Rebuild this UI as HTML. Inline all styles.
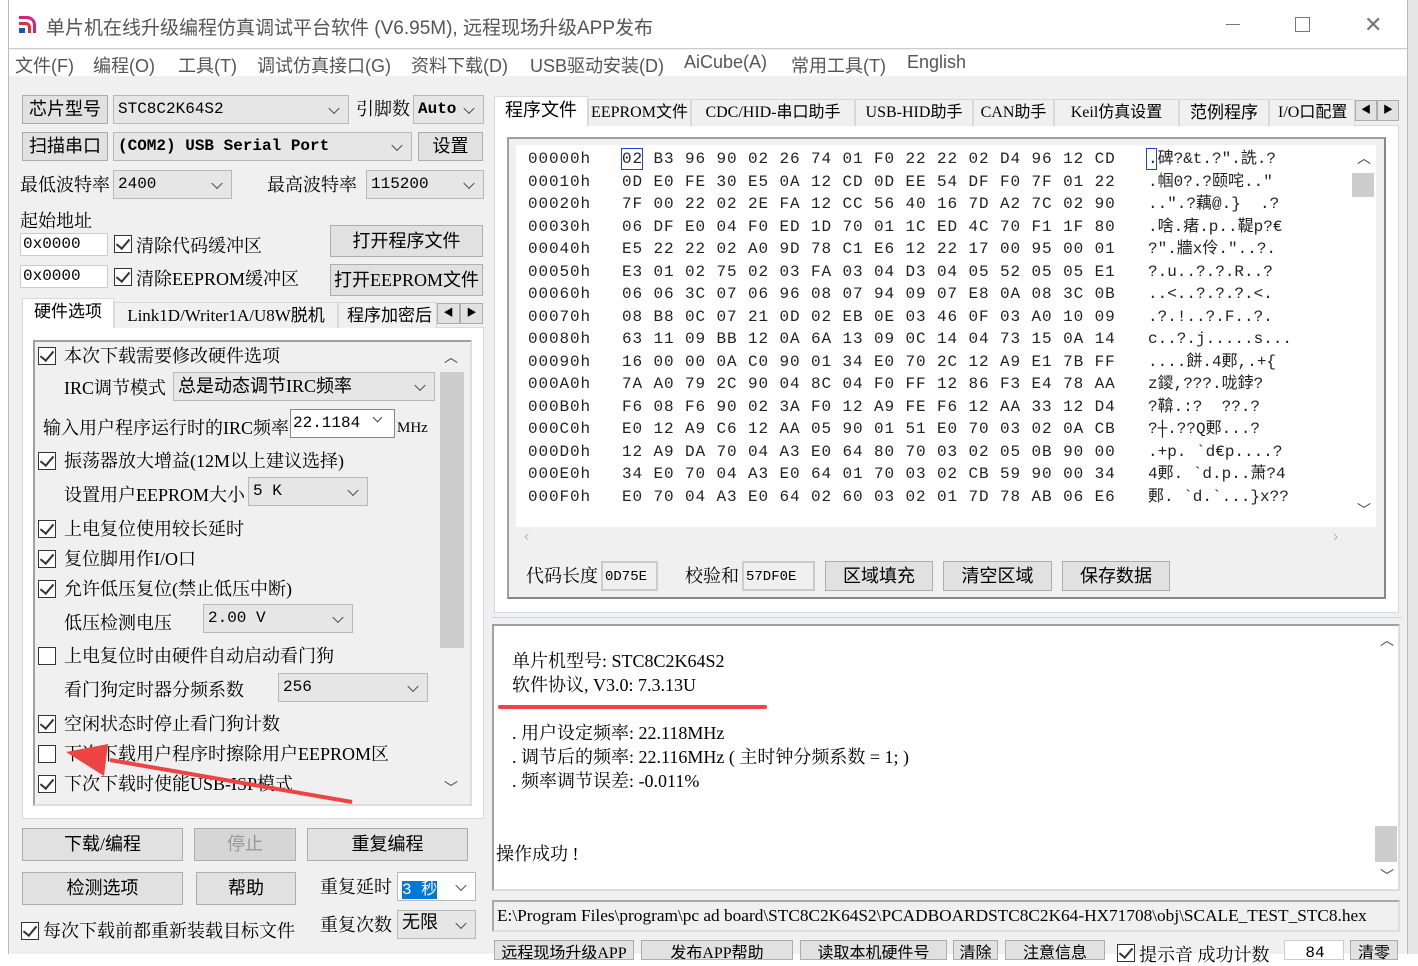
<!DOCTYPE html>
<html><head><meta charset="utf-8">
<style>
*{box-sizing:border-box;margin:0;padding:0}
body{width:1418px;height:954px;overflow:hidden;background:#fff;position:relative;font-family:"Liberation Sans","Noto Sans CJK SC",sans-serif;color:#000}
.a{position:absolute;white-space:nowrap}
.t{position:absolute;white-space:nowrap;font-size:18px;line-height:22px;font-family:"Liberation Serif","Noto Serif CJK SC","Noto Sans CJK SC",serif}
.btn{position:absolute;background:#e1e1e1;border:1px solid #adadad;font-size:18px;text-align:center;font-family:"Liberation Serif","Noto Sans CJK SC",sans-serif;overflow:hidden}
.cb{position:absolute;background:#e6e6e6;border:1px solid #b8b8b8;font-size:16px;font-family:"Liberation Mono","Noto Sans CJK SC",monospace;padding-left:4px}
.cb::after{content:"";position:absolute;right:10px;top:50%;width:7px;height:7px;border-right:1.5px solid #444;border-bottom:1.5px solid #444;transform:translateY(-70%) rotate(45deg)}
.in{position:absolute;background:#fff;border:1px solid #ccc;font-size:16px;font-family:"Liberation Mono",monospace;padding-left:2px}
.ck{position:absolute;width:18px;height:18px;border:1.5px solid #333;background:#fff}
.ck.on::after{content:"";position:absolute;left:4px;top:0px;width:6px;height:11px;border-right:2px solid #333;border-bottom:2px solid #333;transform:rotate(40deg)}
.hex{position:absolute;font-family:"Liberation Mono",monospace;font-size:16px;letter-spacing:0.9px;line-height:22.5px;white-space:pre;color:#222}
.tab{position:absolute;border:1px solid #d9d9d9;border-bottom:none;background:#f0f0f0;font-size:17px;text-align:center;line-height:26px;font-family:"Liberation Serif","Noto Sans CJK SC",serif}
</style></head><body>
<div class="a" style="left:1408px;top:0;width:10px;height:954px;background:#e6e6e6"></div>
<div class="a" style="left:8px;top:0;width:1400px;height:954px;border-left:1px solid #bbb;border-right:1px solid #bbb;background:#f0f0f0"></div>
<div class="a" style="left:9px;top:0;width:1398px;height:49px;background:#fff;border-bottom:1px solid #ccc"></div>
<div class="a" style="left:9px;top:50px;width:1398px;height:26px;background:#fff"></div>
<svg class="a" style="left:17px;top:13px" width="22" height="22" viewBox="0 0 22 22"><path d="M2 3h8a9 9 0 0 1 9 9v8h-3v-8a6 6 0 0 0-6-6H2z" fill="#d4237a"/><path d="M2 9h7a5 5 0 0 1 5 5v6h-3v-6a2 2 0 0 0-2-2H2z" fill="#e0303a"/><rect x="2" y="15" width="6" height="5" fill="#2050c0"/></svg>
<div class="a" style="left:46px;top:13px;font-size:19px;color:#555;font-family:'Liberation Sans','Noto Sans CJK SC',sans-serif">单片机在线升级编程仿真调试平台软件 (V6.95M), 远程现场升级APP发布</div>
<div class="a" style="left:1226px;top:24px;width:14px;height:1px;background:#777"></div>
<div class="a" style="left:1295px;top:17px;width:15px;height:15px;border:1px solid #777"></div>
<div class="a" style="left:1364px;top:14px;font-size:22px;color:#777;line-height:22px">✕</div>
<div class="a" style="left:15px;top:52px;font-size:18px;color:#555">文件(F)</div>
<div class="a" style="left:93px;top:52px;font-size:18px;color:#555">编程(O)</div>
<div class="a" style="left:178px;top:52px;font-size:18px;color:#555">工具(T)</div>
<div class="a" style="left:257px;top:52px;font-size:18px;color:#555">调试仿真接口(G)</div>
<div class="a" style="left:411px;top:52px;font-size:18px;color:#555">资料下载(D)</div>
<div class="a" style="left:530px;top:52px;font-size:18px;color:#555">USB驱动安装(D)</div>
<div class="a" style="left:684px;top:52px;font-size:18px;color:#555">AiCube(A)</div>
<div class="a" style="left:791px;top:52px;font-size:18px;color:#555">常用工具(T)</div>
<div class="a" style="left:907px;top:52px;font-size:18px;color:#555">English</div>

<div class="btn" style="left:22px;top:95px;width:86px;height:29px;line-height:27px">芯片型号</div>
<div class="cb" style="left:113px;top:95px;width:236px;height:29px;line-height:27px">STC8C2K64S2</div>
<div class="t" style="left:356px;top:98px">引脚数</div>
<div class="cb" style="left:413px;top:95px;width:71px;height:29px;line-height:27px;font-weight:bold">Auto</div>
<div class="btn" style="left:22px;top:132px;width:86px;height:29px;line-height:27px">扫描串口</div>
<div class="cb" style="left:113px;top:132px;width:299px;height:29px;line-height:27px;font-weight:bold">(COM2) USB Serial Port</div>
<div class="btn" style="left:418px;top:132px;width:65px;height:29px;line-height:27px">设置</div>
<div class="t" style="left:20px;top:174px">最低波特率</div>
<div class="cb" style="left:113px;top:170px;width:119px;height:29px;line-height:27px">2400</div>
<div class="t" style="left:267px;top:174px">最高波特率</div>
<div class="cb" style="left:366px;top:170px;width:118px;height:29px;line-height:27px">115200</div>
<div class="t" style="left:20px;top:210px">起始地址</div>
<div class="in" style="left:20px;top:233px;width:88px;height:23px;line-height:21px">0x0000</div>
<div class="ck on" style="left:114px;top:235px"></div>
<div class="t" style="left:136px;top:235px">清除代码缓冲区</div>
<div class="btn" style="left:330px;top:225px;width:153px;height:32px;line-height:30px">打开程序文件</div>
<div class="in" style="left:20px;top:265px;width:88px;height:23px;line-height:21px">0x0000</div>
<div class="ck on" style="left:114px;top:268px"></div>
<div class="t" style="left:136px;top:268px">清除EEPROM缓冲区</div>
<div class="btn" style="left:330px;top:264px;width:153px;height:32px;line-height:30px">打开EEPROM文件</div>
<div class="a" style="left:22px;top:327px;width:462px;height:492px;background:#fff;border:1px solid #d9d9d9"></div>
<div class="tab" style="left:22px;top:298px;width:92px;height:30px;background:#fff;border-color:#d9d9d9">硬件选项</div>
<div class="tab" style="left:114px;top:302px;width:224px;height:26px">Link1D/Writer1A/U8W脱机</div>
<div class="tab" style="left:338px;top:302px;width:99px;height:26px;text-align:left;padding-left:8px;overflow:hidden">程序加密后</div>
<div class="btn" style="left:437px;top:303px;width:23px;height:21px;font-size:10px;line-height:19px">◀</div>
<div class="btn" style="left:460px;top:303px;width:23px;height:21px;font-size:10px;line-height:19px">▶</div>
<div class="a" style="left:33px;top:340px;width:439px;height:466px;background:#f0f0f0;border:2px solid #a0a0a0;border-right-color:#ddd;border-bottom-color:#ddd"></div>
<div class="a" style="left:440px;top:372px;width:24px;height:276px;background:#cdcdcd"></div>
<div class="a" style="left:444px;top:347px;font-size:14px;color:#444">︿</div>
<div class="a" style="left:444px;top:778px;font-size:14px;color:#444">﹀</div>
<div class="ck on" style="left:38px;top:347px"></div><div class="t" style="left:64px;top:345px">本次下载需要修改硬件选项</div>
<div class="t" style="left:64px;top:377px">IRC调节模式</div>
<div class="cb" style="left:173px;top:372px;width:262px;height:29px;line-height:27px;font-size:18px;font-family:'Liberation Serif','Noto Sans CJK SC',serif">总是动态调节IRC频率</div>
<div class="t" style="left:43px;top:417px">输入用户程序运行时的IRC频率</div>
<div class="in" style="left:290px;top:409px;width:105px;height:29px;line-height:27px;border-color:#888">22.1184</div>
<div class="a" style="left:374px;top:414px;width:7px;height:7px;border-right:1.5px solid #444;border-bottom:1.5px solid #444;transform:rotate(45deg)"></div>
<div class="t" style="left:397px;top:417px;font-size:15px">MHz</div>
<div class="ck on" style="left:38px;top:452px"></div><div class="t" style="left:64px;top:450px">振荡器放大增益(12M以上建议选择)</div>
<div class="t" style="left:64px;top:484px">设置用户EEPROM大小</div>
<div class="cb" style="left:248px;top:477px;width:120px;height:29px;line-height:27px">5  K</div>
<div class="ck on" style="left:38px;top:520px"></div><div class="t" style="left:64px;top:518px">上电复位使用较长延时</div>
<div class="ck on" style="left:38px;top:550px"></div><div class="t" style="left:64px;top:548px">复位脚用作I/O口</div>
<div class="ck on" style="left:38px;top:580px"></div><div class="t" style="left:64px;top:578px">允许低压复位(禁止低压中断)</div>
<div class="t" style="left:64px;top:612px">低压检测电压</div>
<div class="cb" style="left:203px;top:604px;width:150px;height:29px;line-height:27px">2.00 V</div>
<div class="ck" style="left:38px;top:647px"></div><div class="t" style="left:64px;top:645px">上电复位时由硬件自动启动看门狗</div>
<div class="t" style="left:64px;top:679px">看门狗定时器分频系数</div>
<div class="cb" style="left:278px;top:673px;width:150px;height:29px;line-height:27px">256</div>
<div class="ck on" style="left:38px;top:715px"></div><div class="t" style="left:64px;top:713px">空闲状态时停止看门狗计数</div>
<div class="ck" style="left:38px;top:745px"></div><div class="t" style="left:64px;top:743px">下次下载用户程序时擦除用户EEPROM区</div>
<div class="ck on" style="left:38px;top:775px"></div><div class="t" style="left:64px;top:773px">下次下载时使能USB-ISP模式</div>
<svg class="a" style="left:0;top:0" width="500" height="820"><path d="M352 802 L110 760" stroke="#ee4444" stroke-width="4" fill="none"/><path d="M66 752 L108 744 L104 776 Z" fill="#ee4444"/></svg>
<div class="btn" style="left:22px;top:828px;width:161px;height:33px;line-height:31px">下载/编程</div>
<div class="btn" style="left:194px;top:828px;width:102px;height:33px;line-height:31px;color:#999;background:#d6d6d6">停止</div>
<div class="btn" style="left:307px;top:828px;width:161px;height:33px;line-height:31px">重复编程</div>
<div class="btn" style="left:22px;top:872px;width:161px;height:33px;line-height:31px">检测选项</div>
<div class="btn" style="left:196px;top:872px;width:100px;height:33px;line-height:31px">帮助</div>
<div class="t" style="left:320px;top:876px">重复延时</div>
<div class="cb" style="left:397px;top:872px;width:79px;height:29px;background:#fff;padding-top:2px"><span style="background:#0078d7;color:#fff;font-size:16px">3 秒</span></div>
<div class="t" style="left:320px;top:914px">重复次数</div>
<div class="cb" style="left:397px;top:910px;width:79px;height:29px;line-height:27px;font-size:18px">无限</div>
<div class="ck on" style="left:21px;top:922px"></div><div class="t" style="left:43px;top:920px">每次下载前都重新装载目标文件</div>

<div class="a" style="left:494px;top:125px;width:905px;height:488px;background:#fff;border:1px solid #d9d9d9"></div>
<div class="tab" style="left:494px;top:96px;width:94px;height:30px;background:#fff;font-size:18px">程序文件</div>
<div class="tab" style="left:588px;top:99px;width:103px;height:27px;font-size:16px">EEPROM文件</div>
<div class="tab" style="left:691px;top:99px;width:164px;height:27px;font-size:16px">CDC/HID-串口助手</div>
<div class="tab" style="left:855px;top:99px;width:118px;height:27px;font-size:16px">USB-HID助手</div>
<div class="tab" style="left:973px;top:99px;width:81px;height:27px;font-size:16px">CAN助手</div>
<div class="tab" style="left:1054px;top:99px;width:125px;height:27px;font-size:16px">Keil仿真设置</div>
<div class="tab" style="left:1179px;top:99px;width:90px;height:27px;font-size:17px">范例程序</div>
<div class="tab" style="left:1269px;top:99px;width:86px;height:27px;font-size:16px;overflow:hidden;text-align:left;padding-left:8px">I/O口配置</div>
<div class="btn" style="left:1355px;top:100px;width:22px;height:21px;font-size:10px;line-height:19px">◀</div>
<div class="btn" style="left:1377px;top:100px;width:22px;height:21px;font-size:10px;line-height:19px">▶</div>
<div class="a" style="left:507px;top:137px;width:879px;height:462px;background:#f0f0f0;border:2px solid #a0a0a0;border-right-color:#888;border-bottom-color:#888"></div>
<div class="a" style="left:516px;top:145px;width:860px;height:382px;background:#fff"></div>
<div class="a" style="left:1352px;top:173px;width:22px;height:24px;background:#cdcdcd"></div>
<div class="a" style="left:1357px;top:148px;font-size:14px;color:#444">︿</div>
<div class="a" style="left:1357px;top:500px;font-size:14px;color:#444">﹀</div>
<div class="a" style="left:524px;top:528px;font-size:16px;color:#bbb">‹</div>
<div class="a" style="left:1333px;top:528px;font-size:16px;color:#bbb">›</div>
<div class="hex" style="left:528px;top:148px">00000h
00010h
00020h
00030h
00040h
00050h
00060h
00070h
00080h
00090h
000A0h
000B0h
000C0h
000D0h
000E0h
000F0h</div>
<div class="hex" style="left:622px;top:148px">02 B3 96 90 02 26 74 01 F0 22 22 02 D4 96 12 CD
0D E0 FE 30 E5 0A 12 CD 0D EE 54 DF F0 7F 01 22
7F 00 22 02 2E FA 12 CC 56 40 16 7D A2 7C 02 90
06 DF E0 04 F0 ED 1D 70 01 1C ED 4C 70 F1 1F 80
E5 22 22 02 A0 9D 78 C1 E6 12 22 17 00 95 00 01
E3 01 02 75 02 03 FA 03 04 D3 04 05 52 05 05 E1
06 06 3C 07 06 96 08 07 94 09 07 E8 0A 08 3C 0B
08 B8 0C 07 21 0D 02 EB 0E 03 46 0F 03 A0 10 09
63 11 09 BB 12 0A 6A 13 09 0C 14 04 73 15 0A 14
16 00 00 0A C0 90 01 34 E0 70 2C 12 A9 E1 7B FF
7A A0 79 2C 90 04 8C 04 F0 FF 12 86 F3 E4 78 AA
F6 08 F6 90 02 3A F0 12 A9 FE F6 12 AA 33 12 D4
E0 12 A9 C6 12 AA 05 90 01 51 E0 70 03 02 0A CB
12 A9 DA 70 04 A3 E0 64 80 70 03 02 05 0B 90 00
34 E0 70 04 A3 E0 64 01 70 03 02 CB 59 90 00 34
E0 70 04 A3 E0 64 02 60 03 02 01 7D 78 AB 06 E6</div>
<div class="a" style="left:621px;top:148px;width:22px;height:22px;border:1.5px solid #2040e0"></div>
<div class="a" style="left:1146px;top:148px;width:11px;height:22px;border:1.5px solid #2040e0"></div>
<div class="hex" style="left:1148px;top:148px;letter-spacing:0;font-family:'Liberation Mono','Noto Sans CJK SC',monospace">.碑?&t.?".詵.?
.帼0?.?颐咤.."
..".?藕@.}  .?
.啥.瘏.p..鞮p?€
?".牆x伶."..?.
?.u..?.?.R..?
..<..?.?.?.<.
.?.!..?.F..?.
c..?.j.....s...
....餅.4郠,.+{
z鑁,???.咙鋍?
?鞥.:?  ??.?
?┼.??Q郠...?
.+p. `d€p....?
4郠. `d.p..萧?4
郠. `d.`...}x??</div>
<div class="t" style="left:526px;top:565px">代码长度</div>
<div class="in" style="left:601px;top:561px;width:57px;height:30px;line-height:28px;background:#f0f0f0;border:2px solid #ccc;font-size:14px">0D75E</div>
<div class="t" style="left:685px;top:565px">校验和</div>
<div class="in" style="left:742px;top:561px;width:73px;height:30px;line-height:28px;background:#f0f0f0;border:2px solid #ccc;font-size:14px">57DF0E</div>
<div class="btn" style="left:825px;top:561px;width:108px;height:30px;line-height:28px">区域填充</div>
<div class="btn" style="left:943px;top:561px;width:109px;height:30px;line-height:28px">清空区域</div>
<div class="btn" style="left:1062px;top:561px;width:108px;height:30px;line-height:28px">保存数据</div>
<div class="a" style="left:492px;top:617px;width:910px;height:1px;background:#b8d8f0"></div>
<div class="a" style="left:492px;top:624px;width:908px;height:267px;background:#fff;border:2px solid #a0a0a0;border-right-color:#ddd;border-bottom-color:#ddd"></div>
<div class="a" style="left:1375px;top:826px;width:22px;height:36px;background:#cdcdcd"></div>
<div class="a" style="left:1380px;top:630px;font-size:14px;color:#444">︿</div>
<div class="a" style="left:1380px;top:866px;font-size:14px;color:#444">﹀</div>
<div class="t" style="left:512px;top:650px;font-size:18px">单片机型号: STC8C2K64S2</div>
<div class="t" style="left:512px;top:674px;font-size:18px">软件协议, V3.0: 7.3.13U</div>
<div class="a" style="left:498px;top:705px;width:269px;height:4px;background:#ee4444;border-radius:2px"></div>
<div class="t" style="left:512px;top:722px;font-size:18px">. 用户设定频率: 22.118MHz</div>
<div class="t" style="left:512px;top:746px;font-size:18px">. 调节后的频率: 22.116MHz ( 主时钟分频系数 = 1; )</div>
<div class="t" style="left:512px;top:770px;font-size:18px">. 频率调节误差: -0.011%</div>
<div class="t" style="left:496px;top:843px;font-size:18px">操作成功 !</div>
<div class="a" style="left:492px;top:900px;width:908px;height:32px;background:#f0f0f0;border:2px solid #a8a8a8;border-right-color:#ddd;border-bottom-color:#ddd;overflow:hidden"></div>
<div class="t" style="left:497px;top:905px;font-size:17.3px;letter-spacing:0">E:\Program Files\program\pc ad board\STC8C2K64S2\PCADBOARDSTC8C2K64-HX71708\obj\SCALE_TEST_STC8.hex</div>
<div class="btn" style="left:494px;top:940px;width:140px;height:20px;font-size:16px;line-height:26px">远程现场升级APP发布</div>
<div class="btn" style="left:641px;top:940px;width:152px;height:20px;font-size:16px;line-height:26px">发布APP帮助</div>
<div class="btn" style="left:800px;top:940px;width:147px;height:20px;font-size:16px;line-height:26px">读取本机硬件号</div>
<div class="btn" style="left:953px;top:940px;width:45px;height:20px;font-size:16px;line-height:26px">清除</div>
<div class="btn" style="left:1005px;top:940px;width:100px;height:20px;font-size:16px;line-height:26px">注意信息</div>
<div class="ck on" style="left:1117px;top:944px"></div>
<div class="t" style="left:1139px;top:944px">提示音 成功计数</div>
<div class="in" style="left:1284px;top:940px;width:60px;height:20px;text-align:center;line-height:24px">84</div>
<div class="btn" style="left:1350px;top:940px;width:48px;height:20px;font-size:16px;line-height:26px">清零</div>
</body></html>
